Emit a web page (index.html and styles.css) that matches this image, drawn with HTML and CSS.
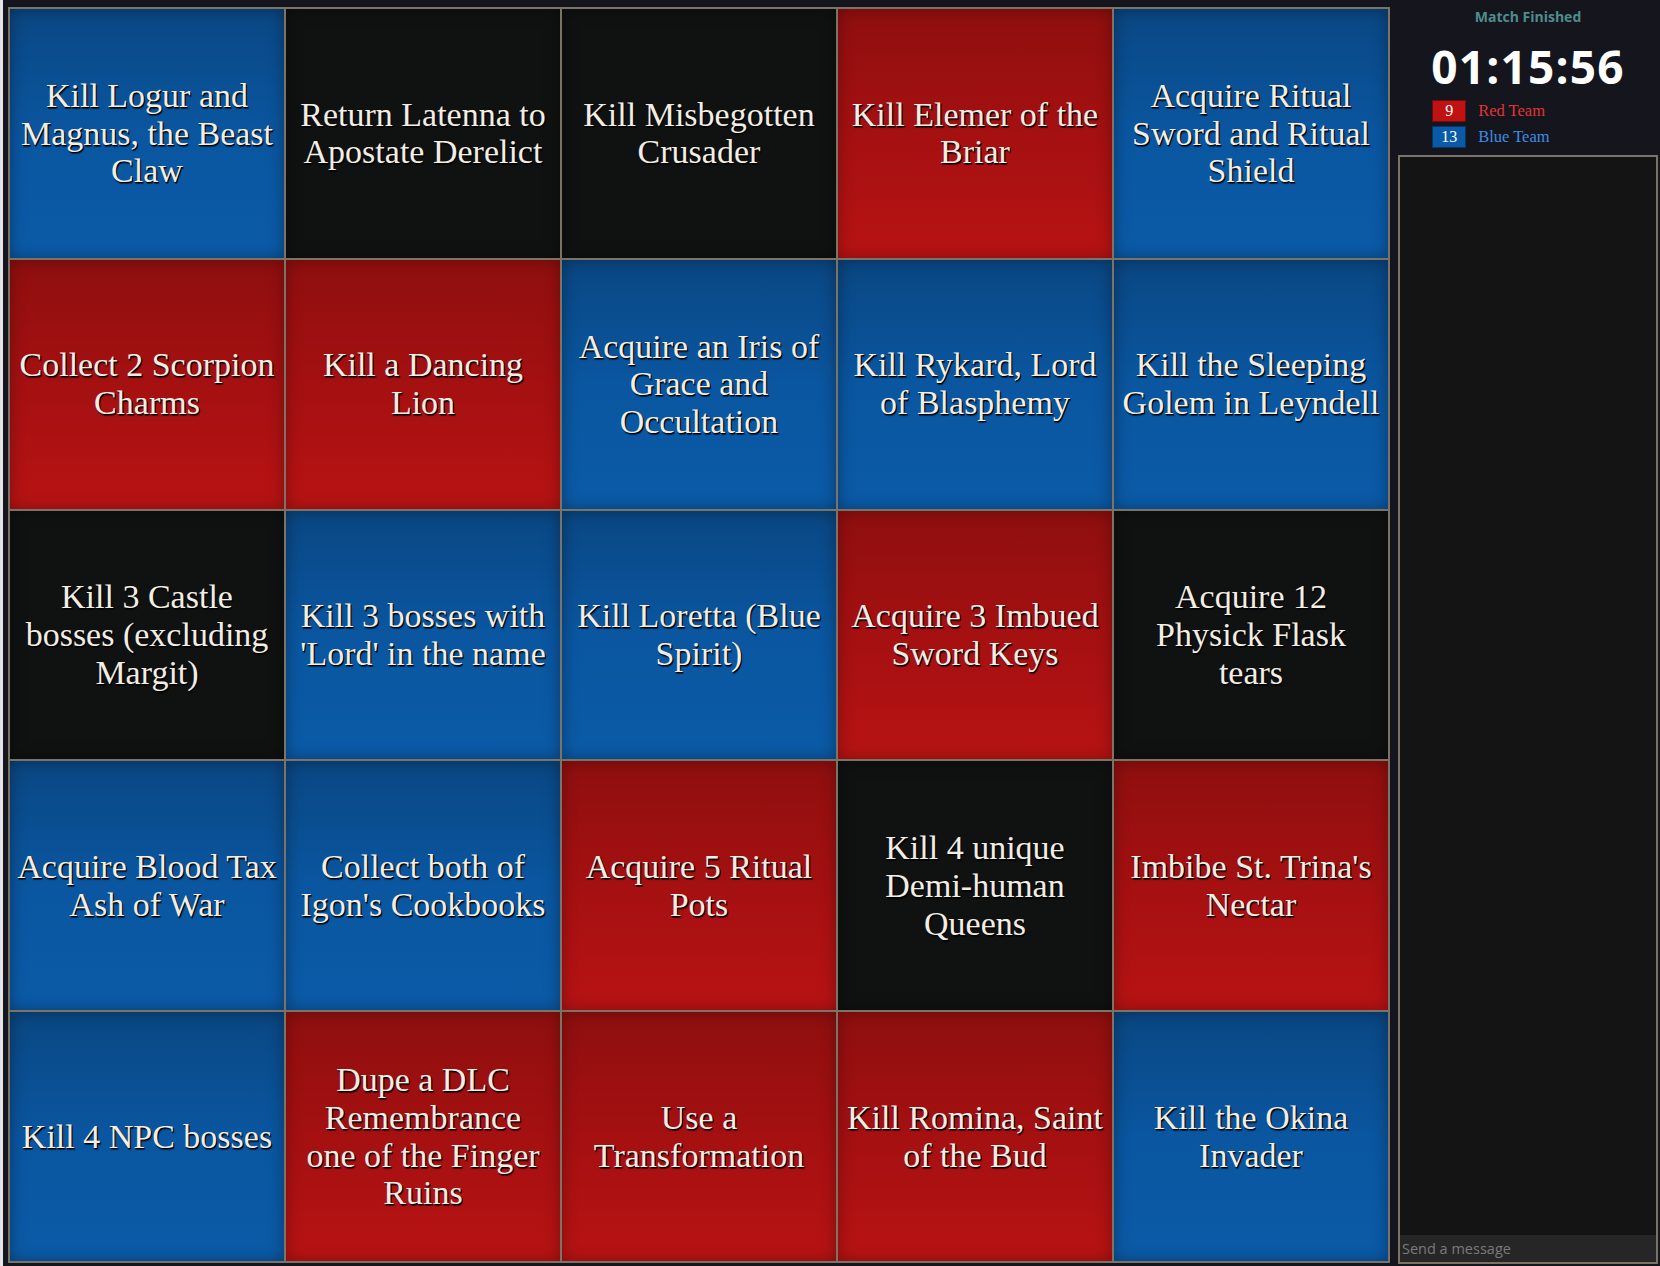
FILE: index.html
```html
<!DOCTYPE html>
<html lang="en">
<head>
<meta charset="utf-8">
<title>Bingo Match</title>
<link rel="stylesheet" href="styles.css">
</head>
<body>
<div class="page">
  <div class="board">
    <div class="cell blue">Kill Logur and<br>Magnus, the Beast<br>Claw</div>
    <div class="cell black">Return Latenna to<br>Apostate Derelict</div>
    <div class="cell black">Kill Misbegotten<br>Crusader</div>
    <div class="cell red">Kill Elemer of the<br>Briar</div>
    <div class="cell blue">Acquire Ritual<br>Sword and Ritual<br>Shield</div>

    <div class="cell red">Collect 2 Scorpion<br>Charms</div>
    <div class="cell red">Kill a Dancing<br>Lion</div>
    <div class="cell blue">Acquire an Iris of<br>Grace and<br>Occultation</div>
    <div class="cell blue">Kill Rykard, Lord<br>of Blasphemy</div>
    <div class="cell blue">Kill the Sleeping<br>Golem in Leyndell</div>

    <div class="cell black">Kill 3 Castle<br>bosses (excluding<br>Margit)</div>
    <div class="cell blue">Kill 3 bosses with<br>'Lord' in the name</div>
    <div class="cell blue">Kill Loretta (Blue<br>Spirit)</div>
    <div class="cell red">Acquire 3 Imbued<br>Sword Keys</div>
    <div class="cell black">Acquire 12<br>Physick Flask<br>tears</div>

    <div class="cell blue">Acquire Blood Tax<br>Ash of War</div>
    <div class="cell blue">Collect both of<br>Igon's Cookbooks</div>
    <div class="cell red">Acquire 5 Ritual<br>Pots</div>
    <div class="cell black">Kill 4 unique<br>Demi-human<br>Queens</div>
    <div class="cell red">Imbibe St. Trina's<br>Nectar</div>

    <div class="cell blue">Kill 4 NPC bosses</div>
    <div class="cell red">Dupe a DLC<br>Remembrance<br>one of the Finger<br>Ruins</div>
    <div class="cell red">Use a<br>Transformation</div>
    <div class="cell red">Kill Romina, Saint<br>of the Bud</div>
    <div class="cell blue">Kill the Okina<br>Invader</div>
  </div>

  <aside class="sidebar">
    <div class="status">Match Finished</div>
    <div class="scoreboard">
      <div class="timer">01:15:56</div>
      <div class="team">
        <span class="score score-red">9</span>
        <span class="team-name name-red">Red Team</span>
      </div>
      <div class="team">
        <span class="score score-blue">13</span>
        <span class="team-name name-blue">Blue Team</span>
      </div>
    </div>
    <div class="chat">
      <div class="chat-log"></div>
      <input class="chat-input" type="text" placeholder="Send a message">
    </div>
  </aside>
</div>
</body>
</html>
```

FILE: styles.css
```css
html, body {
  margin: 0;
  padding: 0;
  height: 100%;
}

body {
  background: #15151e;
  border-left: 3px solid #e4e4e8;
  box-sizing: border-box;
  overflow: hidden;
}

.page {
  display: flex;
  align-items: flex-start;
  gap: 8px;
  padding: 7px 2px 0 5px;
  height: 100%;
  box-sizing: border-box;
}

.board {
  display: grid;
  grid-template-columns: repeat(5, 274px);
  grid-template-rows: repeat(5, 1fr);
  gap: 2px;
  padding: 2px;
  background: #7b7366;
  width: 1382px;
  height: 1256px;
  box-sizing: border-box;
  flex: none;
}

.cell {
  display: flex;
  align-items: center;
  justify-content: center;
  text-align: center;
  font-family: "Liberation Serif", "Times New Roman", serif;
  font-size: 34px;
  line-height: 37.7px;
  color: #f3ede3;
  text-shadow: 1px 1px 0 #000, 1px 2px 1px rgba(0, 0, 0, 0.6);
  padding: 0 4px;
  white-space: nowrap;
}

.blue {
  background: linear-gradient(to bottom, #0a4783 0%, #0a56a0 50%, #0b5ba8 100%);
  box-shadow: inset 0 0 16px rgba(0, 0, 0, 0.35);
}

.red {
  background: linear-gradient(to bottom, #8f0f0f 0%, #a51011 50%, #b81313 100%);
  box-shadow: inset 0 0 16px rgba(0, 0, 0, 0.3);
}

.black {
  background: #101212;
  box-shadow: inset 0 0 16px rgba(0, 0, 0, 0.4);
}

.sidebar {
  flex: 1;
  height: 1264px;
  display: flex;
  flex-direction: column;
  align-items: stretch;
  margin-top: -7px;
}

.status {
  text-align: center;
  font-family: "Open Sans", "Noto Sans", sans-serif;
  font-weight: 700;
  font-size: 14px;
  color: #4e8e8c;
  padding-top: 8px;
  line-height: 18px;
}

.scoreboard {
  align-self: center;
  display: flex;
  flex-direction: column;
  align-items: flex-start;
  margin-top: 8px;
}

.timer {
  font-family: "Open Sans", "Noto Sans", sans-serif;
  font-weight: 700;
  font-size: 46px;
  line-height: 64px;
  color: #ffffff;
  letter-spacing: 1.2px;
}

.team {
  display: flex;
  align-items: center;
  gap: 12px;
  height: 26px;
  margin-left: 1px;
}

.score {
  display: inline-block;
  box-sizing: border-box;
  width: 34px;
  height: 22px;
  line-height: 20px;
  text-align: center;
  font-family: "Liberation Serif", serif;
  font-size: 16px;
  color: #ffffff;
}

.score-red {
  background: #c01212;
  border: 1px solid #6e0c0c;
}

.score-blue {
  background: #0a5aa8;
  border: 1px solid #0b3664;
}

.team-name {
  font-family: "Liberation Serif", serif;
  font-size: 16.5px;
}

.name-red {
  color: #e23434;
}

.name-blue {
  color: #3a8ee4;
}

.chat {
  flex: 1;
  margin-top: 5px;
  border: 2px solid #7b7366;
  background: #141414;
  display: flex;
  flex-direction: column;
}

.chat-log {
  flex: 1;
}

.chat-input {
  border: none;
  outline: none;
  margin: 0;
  height: 27px;
  padding: 0 2px;
  background: #262626;
  color: #cccccc;
  font-family: "Open Sans", "Noto Sans", sans-serif;
  font-size: 14.5px;
}

.chat-input::placeholder {
  color: #7a7a7a;
}
```
